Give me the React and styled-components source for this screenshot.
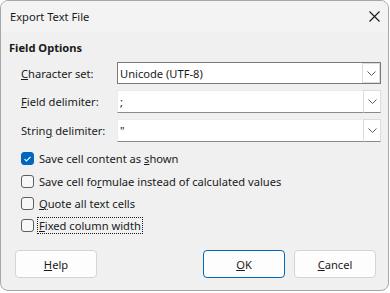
import React from "react";
import styled, { createGlobalStyle, css } from "styled-components";

const Global = createGlobalStyle`
  html, body { margin: 0; padding: 0; background: #ffffff; }
  body { font-family: "Noto Sans", "Open Sans", sans-serif; font-size: 11.15px; color: #1a1a1a; }
  #root { width: 390px; height: 293px; }
`;

const Window = styled.div`
  box-sizing: border-box;
  width: 389px;
  height: 291px;
  border: 1px solid #a7a7a7;
  border-radius: 8px;
  overflow: hidden;
  background: #f0f0f0;
  display: flex;
  flex-direction: column;
`;

const TitleBar = styled.div`
  height: 31px;
  flex: none;
  background: #f3f3f3;
  display: flex;
  align-items: center;
  justify-content: space-between;
  padding: 0 8px 0 9px;
  box-sizing: border-box;
`;

const Title = styled.span`
  font-size: 11.15px;
  color: #1a1a1a;
`;

const Close = styled.svg`
  width: 11px;
  height: 11px;
`;

const Body = styled.div`
  flex: 1;
  display: flex;
  flex-direction: column;
  padding: 7px 6px 0 8px;
`;

const Heading = styled.div`
  font-weight: 700;
  font-size: 11.15px;
  height: 18px;
  line-height: 18px;
`;

const Form = styled.div`
  display: grid;
  grid-template-columns: 96px 264px;
  row-gap: 6px;
  padding-left: 12px;
  margin-top: 5px;
  align-items: center;
`;

const Label = styled.label`
  font-size: 11.15px;
`;

const Select = styled.div`
  box-sizing: border-box;
  height: ${(p) => (p.$focused ? 22 : 23)}px;
  background: #ffffff;
  display: flex;
  align-items: center;
  justify-content: space-between;
  padding-left: 2px;
  ${(p) =>
    p.$focused
      ? css`
          border: 1px solid #7a7a7a;
        `
      : css`
          border: 1px solid #ececec;
          border-bottom-color: #8a8a8a;
        `}
`;

const SelectValue = styled.span`
  font-size: 11.15px;
`;

const DropButton = styled.div`
  box-sizing: border-box;
  width: 18px;
  align-self: stretch;
  margin: ${(p) => (p.$focused ? "0" : "-1px -1px -1px 0")};
  border: 1px solid #dcdcdc;
  border-bottom-color: ${(p) => (p.$focused ? "#dcdcdc" : "#8a8a8a")};
  background: #ffffff;
  display: flex;
  align-items: center;
  justify-content: center;
`;

const Chevron = styled.svg`
  width: 9px;
  height: 5px;
`;

const Checks = styled.div`
  display: flex;
  flex-direction: column;
  gap: 5.8px;
  padding-left: 12px;
  margin-top: 8.5px;
`;

const CheckRow = styled.div`
  display: flex;
  align-items: center;
  gap: 4px;
  height: 16.5px;
`;

const Box = styled.span`
  box-sizing: border-box;
  width: 13px;
  height: 13px;
  border-radius: 3px;
  display: flex;
  align-items: center;
  justify-content: center;
  ${(p) =>
    p.$checked
      ? css`
          background: #0067c0;
          border: 1px solid #0067c0;
        `
      : css`
          background: #f7f7f7;
          border: 1px solid #5e5e5e;
        `}
`;

const CheckText = styled.span`
  font-size: 11.15px;
  padding: 0 1px;
  ${(p) =>
    p.$focus &&
    css`
      outline: 1px dotted #1a1a1a;
      outline-offset: 0;
    `}
`;

const Buttons = styled.div`
  display: flex;
  align-items: center;
  margin-top: auto;
  margin-bottom: 12px;
  padding-left: 6px;
  padding-right: 6px;
`;

const Button = styled.button`
  box-sizing: border-box;
  width: 82px;
  height: 28px;
  border-radius: 4px;
  background: #fdfdfd;
  font-family: inherit;
  font-size: 11.15px;
  color: #1a1a1a;
  padding: 0;
  ${(p) =>
    p.$default
      ? css`
          border: 1px solid #0067c0;
        `
      : css`
          border: 1px solid #d4d4d4;
        `}
  margin-left: ${(p) => p.$gap || 0}px;
`;

const Spacer = styled.div`
  flex: 1;
`;

const ChevronIcon = () => (
  <Chevron viewBox="0 0 9 5">
    <path d="M0.5 0.5 L4.5 4.5 L8.5 0.5" fill="none" stroke="#606060" strokeWidth="1" />
  </Chevron>
);

const Check = ({ checked, children, focus }) => (
  <CheckRow>
    <Box $checked={checked}>
      {checked && (
        <svg width="9" height="8" viewBox="0 0 9 8">
          <path d="M1.5 4.2 L3.5 6 L7.5 1.8" fill="none" stroke="#ffffff" strokeWidth="1.1" />
        </svg>
      )}
    </Box>
    <CheckText $focus={focus}>{children}</CheckText>
  </CheckRow>
);

export default function App() {
  return (
    <>
      <Global />
      <Window>
        <TitleBar>
          <Title>Export Text File</Title>
          <Close viewBox="0 0 11 11">
            <path d="M0.5 0.5 L10.5 10.5 M10.5 0.5 L0.5 10.5" stroke="#1a1a1a" strokeWidth="1.1" />
          </Close>
        </TitleBar>
        <Body>
          <Heading>Field Options</Heading>
          <Form>
            <Label>
              <u>C</u>haracter set:
            </Label>
            <Select $focused>
              <SelectValue>Unicode (UTF-8)</SelectValue>
              <DropButton $focused>
                <ChevronIcon />
              </DropButton>
            </Select>
            <Label>
              <u>F</u>ield delimiter:
            </Label>
            <Select>
              <SelectValue>;</SelectValue>
              <DropButton>
                <ChevronIcon />
              </DropButton>
            </Select>
            <Label>
              Strin<u>g</u> delimiter:
            </Label>
            <Select>
              <SelectValue>"</SelectValue>
              <DropButton>
                <ChevronIcon />
              </DropButton>
            </Select>
          </Form>
          <Checks>
            <Check checked>
              Save cell content as <u>s</u>hown
            </Check>
            <Check>
              Save cell fo<u>r</u>mulae instead of calculated values
            </Check>
            <Check>
              <u>Q</u>uote all text cells
            </Check>
            <Check focus>
              <u>F</u>ixed column width
            </Check>
          </Checks>
          <Buttons>
            <Button>
              <u>H</u>elp
            </Button>
            <Spacer />
            <Button $default>
              <u>O</u>K
            </Button>
            <Button $gap={9}>
              <u>C</u>ancel
            </Button>
          </Buttons>
        </Body>
      </Window>
    </>
  );
}
